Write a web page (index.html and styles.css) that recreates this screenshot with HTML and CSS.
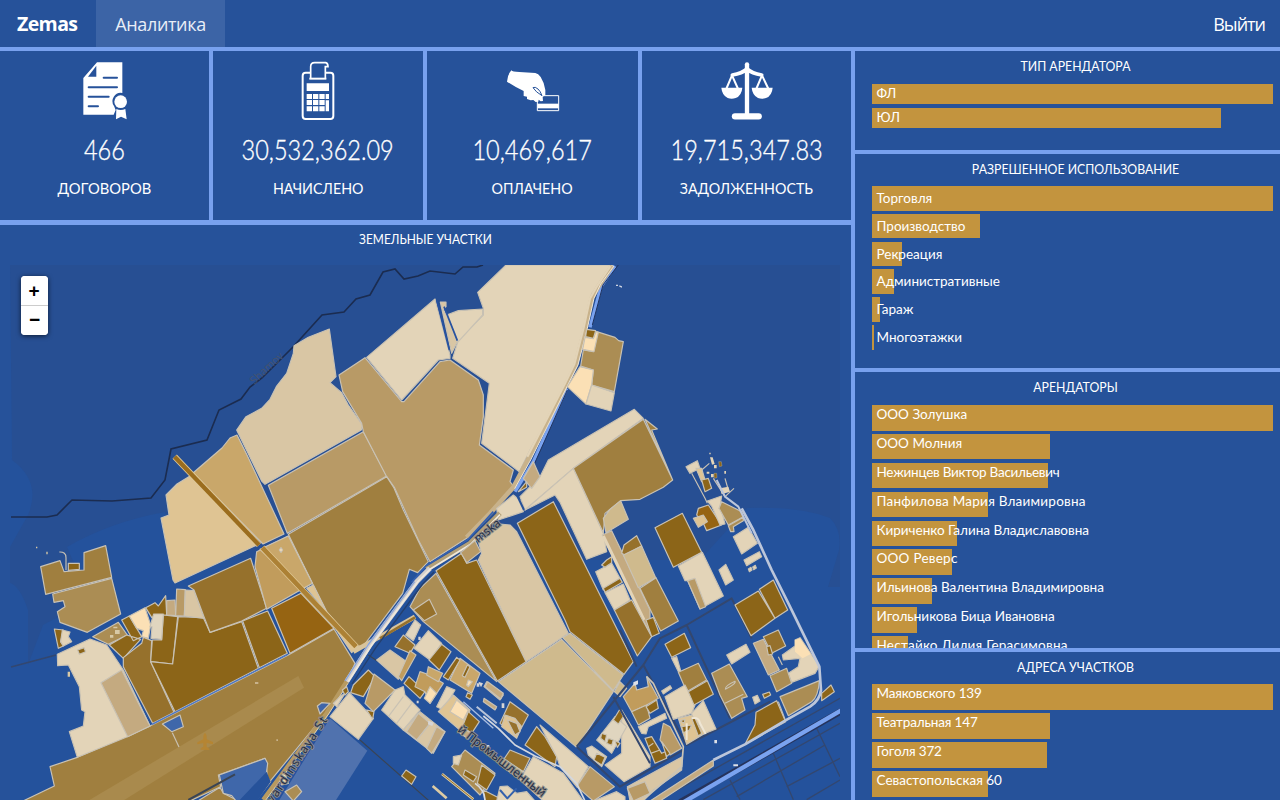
FILE: index.html
```html
<!DOCTYPE html>
<html lang="ru">
<head>
<meta charset="utf-8">
<title>Zemas</title>
<link rel="stylesheet" href="styles.css">
</head>
<body>
<nav class="nav">
  <a class="brand">Zemas</a>
  <a class="tab">Аналитика</a>
  <a class="exit">Выйти</a>
</nav>
<main class="board">
  <div class="left">
    <section class="stats">
      <article class="stat">
        <svg class="icon" viewBox="220 180 186 186"><path fill="#fff" d="M289 187H365V279A25 25 0 0 0 340 318L345 330L339 344H248V234Z"/><path fill="#26529a" d="M287 197V230H262Z"/><path stroke="#26529a" stroke-width="6" stroke-linecap="round" d="M309 233H349M264 262H349M264 290H324M264 319H292"/><circle cx="360" cy="305" r="19" fill="#fff"/><path fill="#fff" d="M347 327Q360 333 374 327L378 358L361 350L346 358Z"/></svg>
        <strong class="value">466</strong><span class="label l1">ДОГОВОРОВ</span>
      </article>
      <article class="stat">
        <svg class="icon" viewBox="862 180 186 186"><rect x="909" y="218" width="92" height="139" rx="9" fill="none" stroke="#fff" stroke-width="6"/><path d="M933 236V200Q933 188 945 188H978Q985 190 985 200H977V236" fill="#26529a" stroke="#fff" stroke-width="5"/><path d="M929 236H980" stroke="#fff" stroke-width="6"/><g fill="#fff"><path d="M921 250H988V273H921ZM921 282h16v15h-16zM940 282h16v15h-16zM959 282h16v15h-16zM978 282h10v15h-10zM921 300h16v15h-16zM940 300h16v15h-16zM959 300h16v15h-16zM978 301h10v33h-10zM921 319h16v15h-16zM940 319h16v15h-16zM959 319h16v15h-16z"/></g></svg>
        <strong class="value">30,532,362.09</strong><span class="label l2">НАЧИСЛЕНО</span>
      </article>
      <article class="stat">
        <svg class="icon" viewBox="228 180 186 186"><path fill="#26529a" stroke="#fff" stroke-width="3" d="M334 287H398V332H334Z"/><path fill="#fff" d="M334 311H398V325H334Z"/><path fill="#fff" d="M256 211Q259 216 280 216L328 219Q337 220 344 231Q356 250 358 270V286L350 290L351 303L344 304L338 299L337 305L329 306L322 300L314 301L303 297L303 290L293 288V273Q270 263 243 245Q244 225 256 211Z"/><path fill="none" stroke="#26529a" stroke-width="3" d="M348 287Q343 273 336 267Q327 259 321 263Q329 276 348 287"/></svg>
        <strong class="value">10,469,617</strong><span class="label l3">ОПЛАЧЕНО</span>
      </article>
      <article class="stat">
        <svg class="icon" viewBox="870 180 186 186"><g fill="none" stroke="#fff" stroke-linecap="round" stroke-linejoin="round"><path stroke-width="13" d="M963 193V345"/><path stroke-width="19" d="M927 349H998"/><path stroke-width="11" d="M963 207Q948 220 919 225M963 207Q978 220 1007 225"/><path stroke-width="6" d="M918 226L902 264M918 226L935 264M1008 226L992 264M1008 226L1026 264"/></g><path fill="#fff" d="M886 263H949Q947 287 929 294Q917 299 905 294Q888 285 886 263ZM977 263H1040Q1038 287 1020 294Q1008 299 996 294Q979 285 977 263Z"/></svg>
        <strong class="value">19,715,347.83</strong><span class="label l4">ЗАДОЛЖЕННОСТЬ</span>
      </article>
    </section>
    <section class="mapcard">
      <h2 class="title maptitle">ЗЕМЕЛЬНЫЕ УЧАСТКИ</h2>
      <div class="map">
        <svg class="canvas" viewBox="10 265 830 535" width="830" height="535">
          <path fill="#274f93" d="M10 265H840V587H828Q836 560 839 550Q842 530 830 518Q800 506 747 508L700 560H180L165 512Q110 522 67 547L90 600L43 625L28 665V610Q20 586 10 583V547L28 515Q42 482 12 460Z"/>
          <path class="river" d="M11 517H47L57 515L72 500L112 501L151 498L165 480L171 449L207 440L219 410L241 399L250 387L262 378L293 347L322 315L344 312L356 299L370 295L383 272L395 269L404 279L418 276L430 271L455 274L463 267L477 267L483 265"/>
          <path class="street" d="M11 667L56 655"/>
          <text class="ghost" transform="translate(254 385) rotate(-43)">Shamov</text>

          <!-- north fields -->
          <g class="z" transform="translate(220 250) scale(.33333)">
            <path class="c2" d="M222 287L265 262L328 237L348 380L330 398L365 428L385 465L427 525L424 540L135 703L125 693L50 540L78 500L125 475L150 448L170 408L200 370L220 310Z"/>
            <path class="c4" d="M145 706L430 545L500 678L202 850Z"/>
            <path class="c1" d="M440 322L645 147L690 315V325L655 330L545 450Z"/>
          </g>
          <g class="z">
            <path class="c5" d="M193 473L222 448L230 438L237 435L247 455L284 534L263 544Z"/>
            <path class="c3" d="M190 476L257 545L175 583L173 580L161 518L169 515L166 495L177 484Z"/>
          </g>
          <g class="z" transform="translate(430 250) scale(.33333)">
            <path class="c4" d="M-273 375L-195 323L-85 455H-78L30 335L60 330L145 390L160 435V500L148 585L250 660L240 695L250 708L110 865L0 935L-35 870L-107 712L-130 680L-200 545L-205 520L-262 425Z"/>
            <path class="c1" d="M228 45H550L515 100L485 130L470 215L435 340L410 400L300 600L268 665L155 580L178 400L68 325L85 270L160 195V175L143 127Z"/>
            <path class="c1" d="M50 195L85 182L158 177V195L85 275Z"/>
            <path class="c2" d="M31 156H48V170L40 178L75 250L82 275L65 310Z"/>
            <path fill="none" stroke="#2752a0" stroke-width="5" d="M20 150L58 300M42 170L82 272"/>
            <path fill="none" stroke="#7aa3f0" stroke-width="10" d="M555 48L513 110L480 232M410 415L310 635L255 725"/>
            <path fill="none" stroke="#c8b28b" stroke-width="14" d="M546 48L505 110L485 145L466 232L437 345L408 405L296 625L250 712L180 790L110 862"/>
            <path fill="none" stroke="#e3d4b8" stroke-width="7" d="M541 48L500 110L480 145L461 232L433 342L404 402L292 620"/>
            <path fill="none" stroke="#eee6d8" stroke-width="3" d="M552 48L512 102L492 145L472 235L444 345L415 402L302 630L254 716"/>
            <path fill="none" stroke="#20335e" stroke-width="3" d="M565 45L519 105L487 225M412 420L314 640"/>
            <path class="c6" d="M500 245L555 262L566 272L580 275L553 425L485 405L490 360L452 348L460 300L490 305Z"/>
            <path class="c0" d="M450 350L490 360L485 405L468 462L412 410ZM465 262L490 266L498 245L505 247L492 305L458 298Z"/>
            <path class="c1" d="M485 405L553 428L543 483L468 462Z"/>
            <path class="c9" d="M470 238L497 242L490 265L467 260Z"/>
            <path class="c1" d="M355 630L613 478L640 505L430 655L285 780L270 740L330 680Z"/>
            <path class="c1" d="M285 780L375 735L390 757L470 928L530 905L520 850L430 655Z"/>
            <path class="c7" d="M430 655L640 508L728 690L700 712L630 748L572 752L525 790L520 848ZM645 508L682 537L665 540L728 690Z"/>
            <path class="c2b" d="M572 752L595 808L528 848L520 805L540 778Z"/>
            <path class="c4b" d="M310 635L330 680L305 715L280 685Z"/>
            <path class="c9" d="M290 695V712L265 725Z"/>
            <path class="c1" d="M200 775L250 735L275 755L280 785L205 810Z"/>
            <path fill="none" stroke="#26529a" stroke-width="6" d="M262 738L282 780"/>
            <path stroke="none" fill="#cfd5e2" d="M558 104h6v4h-6zM568 106l8 3v4l-8-3z"/>
          </g>

          <!-- western parcels and airfield -->
          <g class="z" transform="translate(0 510) scale(.33333)">
            <path class="c7" d="M122 170L180 152L192 185L252 180V128L317 107L335 202L137 253Z"/>
            <path class="c9" d="M205 160H238V178L205 181Z"/>
            <path fill="none" d="M178 126Q198 125 198 143V180"/>
            <path class="c6" d="M158 252L335 205L362 312L262 367L180 337L172 305L195 290L190 272L162 277Z"/>
            <path class="c9" d="M163 357L190 360L182 395L190 408L175 415Z"/>
            <path class="c1" d="M187 360L210 366L205 380L215 395L190 408L182 395Z"/>
            <path class="c7" d="M65 875L163 828L150 770L232 742L450 648L865 435L1002 357L1065 460L1040 520L965 625L805 820L795 745L655 795L662 830L565 875Z"/>
            <path stroke="none" fill="#a98a4d" d="M260 875L895 498L912 533L365 875Z"/>
            <path class="c7" d="M590 875L660 832L670 850L720 875Z"/>
            <path class="c1" d="M172 433L270 387L320 405L370 480L450 648L382 680L232 742L208 665L250 648L255 605L245 600L238 530L205 465L173 467Z"/>
            <path class="c4b" d="M303 518L365 480L450 648L383 680Z"/>
            <path class="c9" d="M233 420L252 413L257 425L238 433Z"/>
            <path class="c6" d="M278 380L355 337L382 375L325 403Z"/>
            <path stroke="none" fill="#d8c9a6" d="M345 360h14v12h-14zM340 350h12v5h-12zM330 375h10v8h-10zM203 485h7v15h-7zM108 110h4v5h-4zM139 125h4v8h-4z"/>
            <path class="c9" d="M328 405L380 375L422 388L370 445ZM365 330L388 318L425 380L400 392ZM437 293L465 278L475 288L497 257L500 315L455 322Z"/>
            <path class="c8" d="M370 443L425 400L430 382L455 392L452 455L522 607L458 640L370 470Z"/>
            <path class="c9" d="M490 315L533 320L518 462L452 455L457 390H485Z"/>
            <path class="c9" d="M535 320L610 323L630 367L725 335L775 475L525 605L452 455L518 462Z"/>
            <path class="c0" d="M388 318L435 293L452 345L445 385L425 380L430 362L410 355Z"/>
            <path class="c1b" d="M461 312H490L485 388L453 385L456 350H450Z"/>
            <path class="c4b" d="M500 272L525 270L527 317L500 315Z"/>
            <path class="c4" d="M530 237L556 239L553 318L527 317Z"/>
            <path class="c2" d="M556 240L582 242L612 325L553 318Z"/>
            <path class="c8" d="M565 228L752 145L800 295L725 333L630 367L612 320L582 240Z"/>
            <path class="c9" d="M728 333L803 303L862 430L778 473Z"/>
            <path fill="#3f67aa" d="M487 642L540 615L550 650L515 665ZM658 795L795 745L803 760L798 800L812 815L765 875H710L695 857L670 850Z"/>
            <path stroke="none" fill="#26529a" d="M720 869L800 785L812 815L770 875H715Z"/>
            <path fill="none" d="M517 668L537 711"/>
            <path fill="none" stroke="#394455" stroke-width="6" d="M565 870L705 793"/>
            <path stroke="none" fill="#b58533" d="M610 677Q615 661 620 677V688L639 696V703L620 699V710L628 716V720L602 719V715L610 710V699L592 703V697L610 688Z"/>
            <path stroke="none" fill="#c8b28b" d="M765 516h10v6h-10zM829 688h5v5h-5z"/>
            <path fill="none" stroke="#4e78c4" stroke-width="4" d="M456 643L862 434"/>
          </g>

          <g class="z" transform="translate(230 510) scale(.33333)">
            <path class="c7" d="M175 73L470 -100L492 -66L520 0L595 155L563 188L538 178L518 250L400 408H380L290 305L247 220Z"/>
            <path class="c5b" d="M80 125L175 78L247 220L110 298L75 170Z"/>
            <path class="c5" d="M90 118L175 78L247 220L215 238Z"/>
            <path class="c3" d="M230 235L250 225L290 305Z"/>
            <path class="c9b" d="M125 295L213 250L312 355L180 430Z"/>
            <path class="c3" d="M318 358L385 410L365 428Z"/>
            <path class="c0" d="M153 113L158 120L153 127L148 120Z"/>
            <path fill="none" stroke="#e0c894" stroke-width="18" d="M-166 -160L87 105M97 113L380 412"/>
            <path fill="none" stroke="#9b6d1e" stroke-width="13" d="M-166 -160L87 105"/>
            <path fill="none" stroke="#ac8135" stroke-width="14" d="M97 113L378 410"/>
            <path fill="#5072ae" stroke="none" d="M300 625L412 722L315 875H145Z"/>
            <path stroke="#394455" d="M390 690L600 875M415 435L445 455"/>
            <path class="c6" d="M618 190L800 515L580 335L540 290L570 235Z"/>
            <path class="c8" d="M550 300L598 268L620 312L583 332Z"/>
            <path fill="none" stroke="#d8c49c" stroke-width="14" d="M370 425L555 320"/>
            <path fill="none" stroke="#96712c" stroke-width="8" d="M450 385L555 322"/>
            <path fill="none" stroke="#24406f" stroke-width="4" d="M366 522L438 412L578 222L612 186"/>
            <path fill="none" stroke="#3561b0" stroke-width="5" d="M545 217L590 166L712 90L790 5"/>
            <path fill="none" stroke="#b3a078" stroke-width="15" d="M590 178L720 100L810 10"/>
            <path fill="none" stroke="#d5d0cb" stroke-width="15" d="M350 515L420 405L560 215L600 175"/>
            <path fill="none" stroke="#efe9de" stroke-width="5" d="M355 515L425 405L565 213L600 178L722 103L810 14"/>
            <path fill="none" stroke="#8aa5da" stroke-width="4" d="M344 515L414 405L554 215"/>
            <path fill="none" stroke="#b79a60" stroke-width="14" d="M100 870L290 610L350 515"/>
            <path fill="none" stroke="#d8cdb8" stroke-width="3" d="M106 872L296 612L354 520"/>
            <path fill="#4065a8" d="M262 588L275 578L300 580L270 612Z"/>
            <path class="c1" d="M358 548L430 625L385 688L300 620ZM330 560L345 550L320 590L310 580Z"/>
            <path class="c9" d="M370 525L415 480L435 500L400 560L362 548ZM410 600L432 605L428 628ZM337 540L350 530L355 545L345 555Z"/>
            <path class="c4" d="M432 492L495 540L430 605L405 580Z"/>
            <path class="c1" d="M495 540L520 530L525 555L570 600L520 660L455 600Z"/>
            <path class="c2" d="M570 605L645 665L610 730L520 660Z"/>
            <path class="c4b" d="M565 610L600 640L560 690L530 665ZM620 650L645 665L605 730L590 715Z"/>
            <path fill="none" d="M475 620L520 560M500 640L545 580M560 690L605 635"/>
            <path class="c2" d="M440 450L480 420L530 455L505 508Z"/>
            <path class="c8" d="M520 375L555 405L540 430L495 410Z"/>
            <path class="c1b" d="M555 330L572 345L550 392L527 375Z"/>
            <path class="c1" d="M595 362L635 400L600 450L552 415Z"/>
            <path class="c9" d="M635 403L663 425L628 480L597 450Z"/>
            <path class="c5b" d="M540 422L558 435L515 512L505 500Z"/>
            <path class="c9" d="M537 500L585 545L570 565L522 520Z"/>
            <path class="c5b" d="M570 485L600 495L640 520L600 580L585 545L555 530Z"/>
            <path class="c0" d="M600 530L620 550L600 580L583 565Z"/>
            <path class="c5" d="M595 470L638 490L625 515L590 495Z"/>
            <path class="c5" d="M690 445L750 490L725 550L660 510Z"/>
            <path class="c9" d="M680 442L690 450L655 510L640 500ZM712 465L720 470L705 502L697 497ZM713 548L727 555L720 568L708 560Z"/>
            <path class="c0" d="M715 510L727 515L715 530L710 525Z"/>
            <path class="c1" d="M650 530L675 540L640 600L620 590Z"/>
            <path class="c3" d="M670 555L720 600L695 665L625 605Z"/>
            <path class="c0" d="M680 570L715 600L700 630L660 605Z"/>
            <path class="c9" d="M715 605L748 635L725 670L697 650Z"/>
            <path class="c4b" d="M695 650L725 672L715 687L690 670ZM770 515L820 555L810 570L762 530Z"/>
            <path class="c6" d="M165 845L200 825L215 845L190 873Z"/>
            <path class="c0" d="M150 800L165 790L175 820L155 825Z"/>
            <path class="c9" d="M528 780L558 800L545 823L515 798Z"/>
            <path fill="none" d="M763 570L798 597M740 590L800 640" stroke="#b9c4d8" stroke-width="6"/>
            <path fill="none" stroke="#a9bde0" stroke-width="4" d="M700 575L790 655"/>
            <path stroke="none" fill="#d6d5d6" d="M560 572h6v8h-6zM595 632l16 6-4 10-13-5zM745 515l14 5-6 12zM815 580h8v14h-8zM740 520h8v10h-8zM770 705h8v8h-8zM565 380h7v10h-7z"/>
          </g>

          <g class="z" transform="translate(420 510) scale(.33333)">
            <path class="c9" d="M292 40L400 -25L640 455L612 493L450 365L435 330Z"/>
            <path class="c2" d="M175 95L240 42L270 45L290 65L445 370L318 455L175 150L185 130Z"/>
            <path class="c9" d="M48 182L125 130L140 160L170 150L318 455L232 513Z"/>
            <path class="c4" d="M122 128L165 92L182 125L140 158Z"/>
            <path class="c2b" d="M235 515L425 388L580 545L470 712ZM428 383L450 370L610 495L580 542ZM600 515L620 535L600 560L583 545Z"/>
            <path class="c1" d="M527 185L575 160L600 205L550 240ZM555 248L610 222L630 270L583 300Z"/>
            <path class="c9" d="M550 235L600 205L607 217L555 247ZM545 165L560 150L575 140L575 158L555 172Z"/>
            <path class="c4b" d="M547 75L575 62L690 300V370L670 330Z"/>
            <path fill="none" stroke="#e3d4b8" stroke-width="9" d="M550 78L672 330"/>
            <path class="c8" d="M270 575L325 615L290 680L240 640Z"/>
            <path class="c3" d="M255 615L285 625L305 650L290 685L245 650Z"/>
            <path class="c8" d="M262 630L290 640L300 665L285 675Z"/>
            <path class="c9" d="M350 650L375 680L410 740L405 770L315 705Z"/>
            <path class="c1" d="M360 645L505 770L470 830L420 770L410 740Z"/>
            <path class="c4" d="M510 770L583 830L520 873L470 830Z"/>
            <path class="c1" d="M340 740L430 790L490 873H370L300 810Z"/>
            <path class="c8" d="M270 720L330 745L310 785L250 750Z"/>
            <path class="c2b" d="M250 745L310 785L297 807L240 765Z"/>
            <path fill="none" stroke="#d3d7df" stroke-width="5" d="M190 618L235 655L285 705L345 738L420 770L470 820L495 873"/>
            <path class="c6" d="M135 720L225 790L180 855L95 770Z"/>
            <path class="c9" d="M185 765L225 795L200 840L172 820ZM135 780L170 800L160 815L130 795ZM190 840L255 873H195Z"/>
            <path class="c1" d="M100 740L125 735L115 765L100 760Z"/>
            <path fill="none" stroke="#dccba4" stroke-width="8" d="M66 792L160 868M38 828L80 865"/>
            <path fill="none" stroke="#d8dae0" stroke-width="5" d="M165 820Q195 840 195 873"/>
            <path fill="none" stroke="#96712c" stroke-width="3" d="M66 792L160 868"/>
            <path class="c4b" d="M203 515L250 550L242 567L195 530ZM192 565L230 590L225 600L190 575Z"/>
            <path class="c1" d="M605 600L690 740L690 770L612 815L555 765L605 730Z"/>
            <path class="c1b" d="M530 690L585 620L620 650L575 730ZM500 715L515 708L560 740L545 770L505 735Z"/>
            <path class="c9" d="M600 597L610 620L595 642L580 630ZM545 670L560 675L555 695L542 685ZM565 685L580 690L575 706L560 700ZM585 692L600 700L592 712ZM530 730L555 742L545 765L522 750Z"/>
            <path class="c1" d="M240 830L262 828L290 850L320 845L345 873H230Z"/>
            <path class="c1" d="M520 873L590 845L615 860V873Z"/>
            <path fill="none" stroke="#3360ac" stroke-width="6" d="M240 840L262 865L290 835"/>
          </g>

          <!-- eastern blocks -->
          <g class="z" transform="translate(620 510) scale(.33333)">
            <path class="street" d="M-130 710L0 830L190 720M-130 710L70 465L120 385L200 345L335 265L395 385M200 345L330 625M70 465L200 705L450 575M-20 560L90 760M0 360L50 470"/>
            <path class="street thin" d="M120 869L660 565M250 869L660 640M330 810L360 869M460 730L520 869M590 655L660 800M350 860L615 705M560 869L660 810M500 830L660 745"/>
            <path fill="none" stroke="#26335c" stroke-width="19" d="M180 877L665 603"/>
            <path fill="none" stroke="#7aa3f0" stroke-width="13" d="M190 877L665 600"/>
            <path class="c8" d="M5 130L12 105L50 77L65 108L15 135ZM-17 300L35 270L95 380L52 438Z"/>
            <path class="c2b" d="M10 135L65 108L107 203L55 233Z"/>
            <path class="c7" d="M60 235L108 203L175 333L122 363Z"/>
            <path class="c9" d="M78 330L100 322L118 370L95 380Z"/>
            <path class="c9" d="M105 53L187 10L245 127L160 172Z"/>
            <path class="c1" d="M175 168L247 127L310 258L240 297L203 212H195Z"/>
            <path class="c4" d="M203 212L225 205L257 290L240 297Z"/>
            <path class="c1" d="M297 180L317 163L340 210L317 225ZM340 80L385 52L412 100L365 132ZM372 150L418 125L425 140L380 167ZM385 177l8-5 3 8-8 5zM398 171l8-5 3 8-8 5z"/>
            <path class="c9" d="M345 285L415 243L465 325L393 377ZM418 238L460 210L503 300L465 325ZM135 403L193 370L212 413L155 442Z"/>
            <path class="c1" d="M155 445L170 440L182 482L176 487Z"/>
            <path class="c7" d="M175 487L235 460L260 510L200 545Z"/>
            <path class="c1" d="M135 560L195 525L225 585L215 610L160 628ZM215 610L250 572L288 657L230 680Z"/>
            <path class="c9" d="M205 545L262 512L280 553L222 585Z"/>
            <path class="c3" d="M175 625L215 615L255 670L200 703Z"/>
            <path class="c9" d="M180 632L195 628L192 640ZM215 625L225 625L245 670L235 678ZM185 650L215 645L208 660L190 668Z"/>
            <path fill="none" stroke="#efe6d4" stroke-width="6" d="M215 625Q238 620 240 640L257 672M200 640V690"/>
            <path class="c1" d="M320 435L378 403L390 427L335 462ZM125 543L150 527L155 535L130 552Z"/>
            <path class="c6" d="M275 490L328 462L382 560L365 565L375 600L335 625L300 555Z"/>
            <path fill="none" d="M315 580L370 553M316 538Q314 528 345 514Q350 520 316 538"/>
            <path class="c8" d="M430 380L475 360L497 408L455 430Z"/>
            <path class="c4b" d="M400 400L430 388L478 480L445 495Z"/>
            <path class="c9" d="M440 410L450 407L458 432L445 435Z"/>
            <path class="c1" d="M540 383L598 468L585 490L515 517L505 490L535 470L540 445L490 450L487 435L525 408V390Z"/>
            <path stroke="none" class="c0" d="M540 385L572 432L548 445L525 425V390Z"/>
            <path class="c6" d="M450 497L500 475L515 520L470 545Z"/>
            <path fill="none" d="M475 440L487 465"/>
            <path class="c9" d="M408 607L470 572L497 635L375 703L405 645ZM605 550L633 525L643 545L605 572ZM428 553L448 546L452 555L433 565Z"/>
            <path class="c6" d="M480 560L598 512Q595 560 575 575L505 617Z"/>
            <path class="c1b" d="M398 562L412 556L420 573L405 582Z"/>
            <path fill="none" d="M475 575L497 633"/>
            <path class="c5b" d="M10 560L45 520L50 540L85 530L80 500L115 565L80 585L35 605Z"/>
            <path class="c7" d="M35 605L80 585L90 625L55 645Z"/>
            <path class="c9" d="M78 590L110 570L115 595L90 610Z"/>
            <path class="c1" d="M55 650L135 610L140 625L85 650L78 672L65 670Z"/>
            <path class="c4" d="M130 640L150 650L185 715L150 735L120 690Z"/>
            <path class="c9" d="M75 685L95 680L125 730L135 725L140 745L105 760ZM125 695L150 730L140 740Z"/>
            <path fill="none" d="M85 710L100 700M92 730L120 720"/>
            <path class="c2" d="M22 830L187 740L185 780L100 840L70 873H30Z"/>
            <path class="c4" d="M22 835L75 815L90 850L40 873Z"/>
            <path class="c4b" d="M90 873L280 750L280 768L120 873Z"/>
            <path fill="none" stroke="#bcc6da" stroke-width="8" d="M365 -5L400 60L455 180L510 290L598 470L603 540Q600 570 570 590L490 635L375 703L280 750"/>
            <path fill="none" stroke="#cbc4b5" stroke-width="5" d="M80 500L100 520L190 710L185 770L75 865"/>
            <path stroke="none" fill="#dde0e8" d="M283 690h8v10h-8zM340 763h14v6h-14zM40 517l14-6v12l-14 5z"/>
          </g>
          <g class="z" transform="translate(570 400) scale(.33333)">
            <path class="c1" d="M348 200L382 182L390 205L360 220Z"/>
            <path fill="none" d="M365 220L405 295L412 310M395 210L418 190M430 235L465 290L492 265M465 235L475 270"/>
            <path class="c3" d="M378 205L395 205L405 240L395 245Z"/>
            <path class="c9" d="M395 240L415 235L425 265L405 275Z"/>
            <path stroke="none" fill="#e3d4b8" d="M420 172l8 0 6 20-8 2zM432 195h8v10h-8zM423 222h8v10h-8zM450 265l25-5 5 15-25 8zM418 158h4v5h-4zM410 215h8v6h-8zM463 213h5v8h-5z"/>
            <path class="c9" d="M446 185l8 0 2 13-8 2zM432 220l8 0 1 13-8 2z" stroke-width="1"/>
            <path class="c9b" d="M385 325L415 315L455 375L410 392L400 370L380 345Z"/>
            <path class="c3" d="M370 355L400 345L412 365L385 382Z"/>
            <path class="c1" d="M412 303L455 288L450 320L458 345L465 372L450 375L425 318Z"/>
            <path class="c6" d="M455 305L515 335L520 350L475 375L447 325Z"/>
            <path class="c6" d="M475 377L520 352L520 362L490 380L492 395L482 395Z"/>
            <path fill="none" stroke="#bcc6da" stroke-width="6" d="M440 240L465 290L505 320L545 400"/>
          </g>

          <g class="road">
            <text transform="translate(478 543) rotate(-38)">mska</text>
            <text transform="translate(273 804) rotate(-57)" textLength="100">yardinskaya St</text>
            <text transform="translate(457 731) rotate(38)" textLength="108">й Промышленный</text>
          </g>
        </svg>
        <div class="zoom"><button>+</button><button>−</button></div>
      </div>
    </section>
  </div>
  <aside class="right">
    <section class="panel p1"><h2 class="title">ТИП АРЕНДАТОРА</h2>
      <ul class="bars"><li><i style="width:401px"></i><span>ФЛ</span></li><li><i style="width:349px"></i><span>ЮЛ</span></li></ul></section>
    <section class="panel p2"><h2 class="title">РАЗРЕШЕННОЕ ИСПОЛЬЗОВАНИЕ</h2>
      <ul class="bars"><li><i style="width:401px"></i><span>Торговля</span></li><li><i style="width:108px"></i><span>Производство</span></li><li><i style="width:30px"></i><span>Рекреация</span></li><li><i style="width:22px"></i><span>Административные</span></li><li><i style="width:8px"></i><span>Гараж</span></li><li><i style="width:2px"></i><span>Многоэтажки</span></li></ul></section>
    <section class="panel p3"><h2 class="title">АРЕНДАТОРЫ</h2>
      <ul class="bars"><li><i style="width:401px"></i><span>ООО Золушка</span></li><li><i style="width:178px"></i><span>ООО Молния</span></li><li><i style="width:176px"></i><span class="tight">Нежинцев Виктор Васильевич</span></li><li><i style="width:116px"></i><span class="loose">Панфилова Мария Влаимировна</span></li><li><i style="width:85px"></i><span>Кириченко Галина Владиславовна</span></li><li><i style="width:80px"></i><span class="loose">ООО Реверс</span></li><li><i style="width:60px"></i><span>Ильинова Валентина Владимировна</span></li><li><i style="width:45px"></i><span>Игольникова Бица Ивановна</span></li><li><i style="width:36px"></i><span class="loose">Нестайко Лилия Герасимовна</span></li></ul></section>
    <section class="panel p4"><h2 class="title">АДРЕСА УЧАСТКОВ</h2>
      <ul class="bars"><li><i style="width:401px"></i><span class="snug">Маяковского 139</span></li><li><i style="width:178px"></i><span class="snug">Театральная 147</span></li><li><i style="width:175px"></i><span class="snug">Гоголя 372</span></li><li><i style="width:116px"></i><span>Севастопольская 60</span></li></ul></section>
  </aside>
</main>
</body>
</html>
```
FILE: styles.css
```css
* { box-sizing: border-box; }
body { margin: 0; width: 1280px; height: 800px; overflow: hidden; background: #78a1ee; color: #fff; font-family: Lato, "Open Sans", sans-serif; display: flex; flex-direction: column; gap: 4px; }
.nav { height: 47px; flex: none; background: #26529a; display: flex; align-items: stretch; font: 18px/48px "Open Sans", sans-serif; }
.brand { width: 96px; padding-left: 17px; font-weight: 700; font-size: 19.5px; letter-spacing: -.6px; }
.tab { width: 129px; background: #3c64a6; text-align: center; color: #e9eef7; letter-spacing: -.35px; }
.exit { margin-left: auto; padding-right: 15px; letter-spacing: -1px; }
.board { flex: 1; min-height: 0; display: grid; grid-template-columns: 851px 1fr; gap: 4px; }
.left { display: grid; grid-template-rows: 169px 575px; gap: 5px; min-height: 0; }
.stats { display: grid; grid-template-columns: 209px 210px 211px 209px; gap: 4px; }
.stat { background: #26529a; display: flex; flex-direction: column; align-items: center; }
.icon { width: 62px; height: 62px; margin-top: 9px; }
.value { font-weight: 300; font-size: 28px; line-height: 34px; margin-top: 10px; transform: scaleX(.84); -webkit-text-stroke: .35px #fff; }
.label { font-size: 15.5px; line-height: 20px; margin-top: 12px; transform: scaleX(.92); }
.l1 { transform: scaleX(.95); }
.mapcard { background: #26529a; display: flex; flex-direction: column; overflow: hidden; }
.title { margin: 0; font-weight: 400; font-size: 13.5px; line-height: 20px; text-align: center; transform: scaleX(.91); }
.maptitle { padding: 4px 0 16px; transform: scaleX(.885); }
.map { position: relative; margin-left: 10px; width: 830px; height: 535px; flex: none; background: #24529c; }
.canvas { display: block; }
.z { stroke: #c9c2b4; stroke-width: 3.5; stroke-linejoin: round; }
g.z:not([transform]) { stroke-width: 1.2; }
.river { fill: none; stroke: #1b2c50; stroke-width: 1.6; }
.street { fill: none; stroke: #33476f; stroke-width: 1.6; }
.z .street { stroke-width: 6; }
.z .thin { stroke-width: 4; }
.ghost { font: 11px "Open Sans", sans-serif; fill: #45536f; }
.road text { font: 12px "Open Sans", sans-serif; fill: #1d2a45; stroke: #8e8c86; stroke-width: 2px; paint-order: stroke; }
.c0 { fill: #fbe0b5; }
.c1 { fill: #e3d4b8; }
.c1b { fill: #e0d5bf; }
.c2 { fill: #d9c6a4; }
.c2b { fill: #cfba8d; }
.c3 { fill: #dfc493; }
.c4 { fill: #b89a66; }
.c4b { fill: #c4aa80; }
.c5 { fill: #c9a76a; }
.c5b { fill: #c19c5c; }
.c6 { fill: #ab8d54; }
.c7 { fill: #a07f3f; }
.c8 { fill: #96712c; }
.c9 { fill: #8c6518; }
.c9b { fill: #966412; }
.zoom { position: absolute; left: 11px; top: 11px; width: 27px; height: 59px; display: flex; flex-direction: column; border-radius: 4px; background: #fff; box-shadow: 0 1px 5px rgba(0,0,0,.65); overflow: hidden; }
.zoom button { height: 29px; border: 0; padding: 0 1px 0 0; background: #fff; font: bold 19px/29px "Liberation Sans", sans-serif; color: #000; }
.zoom button + button { height: 30px; border-top: 1px solid #ccc; line-height: 26px; padding: 0 0 2px; }
.right { display: grid; grid-template-rows: 99px 214px 276px 148px; gap: 4px; min-height: 0; }
.panel { background: #26529a; padding: 5px 7px 0 17px; overflow: hidden; }
.panel .title { margin: 0 -2.5px 1px 2.5px; }
.bars { list-style: none; margin: 0; padding: 0; display: flex; flex-direction: column; }
.bars li { display: grid; flex: none; grid-template-columns: 401px; white-space: nowrap; }
.bars i { display: block; height: 100%; background: #c3943e; }
.bars i, .bars span { grid-area: 1 / 1; }
.bars span { position: relative; padding-left: 4.5px; font-size: 13.5px; }
.bars .tight { letter-spacing: -.25px; }
.bars .snug { letter-spacing: -.15px; }
.bars .loose { letter-spacing: .25px; }
.p1 .bars { padding-top: 6.5px; gap: 3.5px; }
.p1 li { height: 20.5px; line-height: 19px; }
.p2 .bars { padding-top: 6px; gap: 3.2px; }
.p2 li { height: 24.6px; line-height: 24px; }
.p3 .bars { padding-top: 7px; gap: 3.3px; }
.p3 li { height: 25.6px; line-height: 19px; }
.p4 .bars { padding-top: 6px; gap: 3.3px; }
.p4 li { height: 25.8px; line-height: 18px; }
```
